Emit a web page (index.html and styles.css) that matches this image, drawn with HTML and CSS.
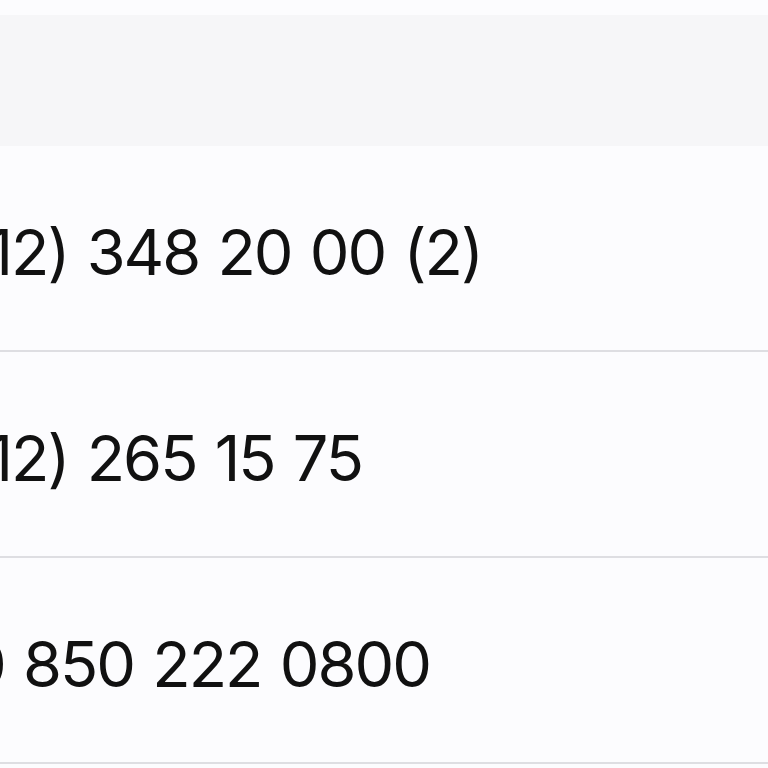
FILE: index.html
```html
<!DOCTYPE html>
<html>
<head>
<meta charset="utf-8">
<link rel="stylesheet" href="styles.css">
</head>
<body>
<div class="page">
  <div class="header"></div>
  <div class="list">
    <div class="row"><span class="phone">(212) 348 20 00 (2)</span></div>
    <div class="row"><span class="phone">(212) 265 15 75</span></div>
    <div class="row"><span class="phone">90 850 222 0800</span></div>
  </div>
</div>
</body>
</html>
```
FILE: styles.css
```css
html, body {
  margin: 0;
  padding: 0;
  background: #fcfcfe;
}
.page {
  width: 768px;
  height: 768px;
  overflow: hidden;
  padding-top: 15px;
  box-sizing: border-box;
}
.header {
  height: 131px;
  background: #f6f6f8;
}
.list {
  display: flex;
  flex-direction: column;
}
.row {
  box-sizing: content-box;
  border-bottom: 2px solid #dedee2;
  display: flex;
  align-items: center;
  padding-top: 8px;
  height: 196px;
  overflow: hidden;
  white-space: nowrap;
}
.phone {
  margin-left: -70px;
  font-family: Inter, "Liberation Sans", sans-serif;
  font-size: 63px;
  color: #111;
  letter-spacing: -2px;
  word-spacing: 2.5px;
}
```
